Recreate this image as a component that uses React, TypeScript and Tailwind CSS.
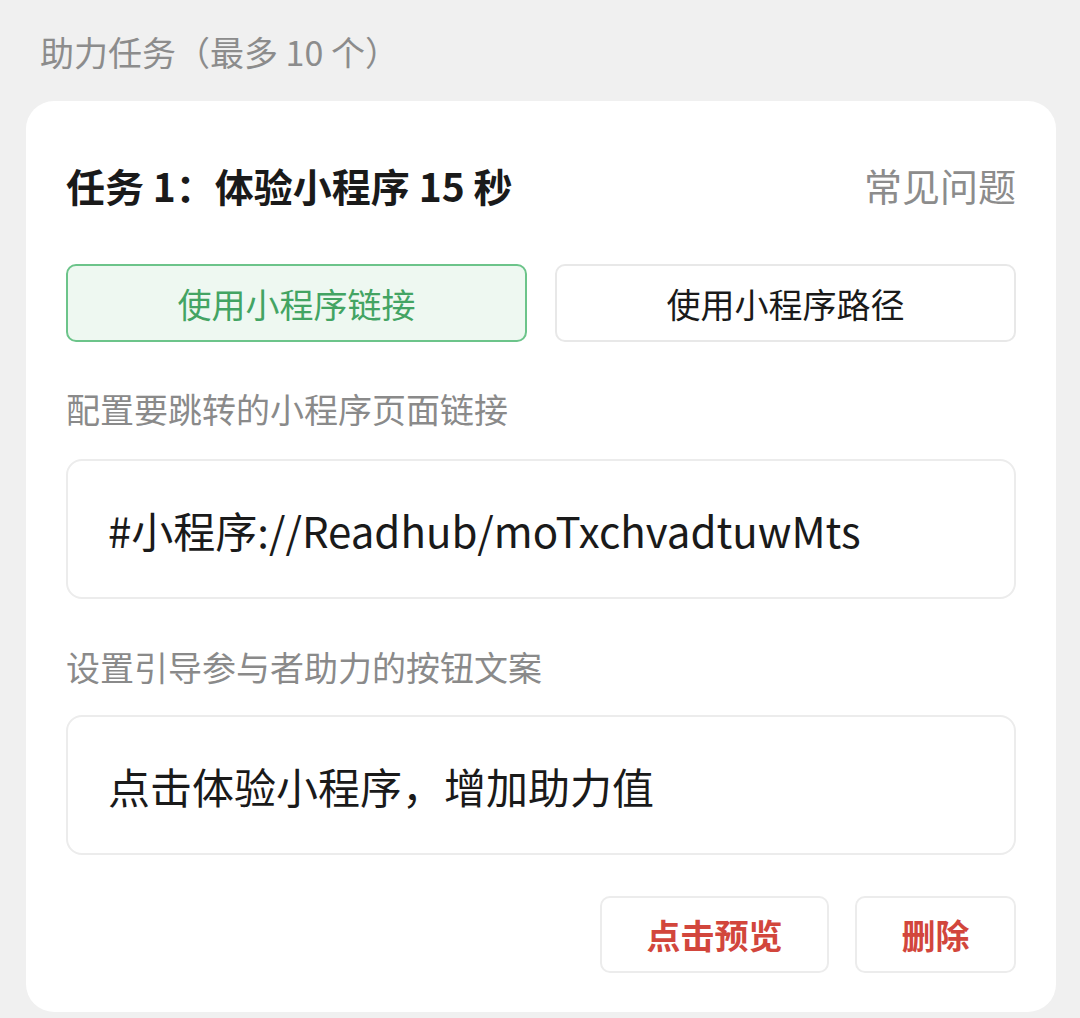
const font = "font-['Noto_Sans_CJK_SC','Noto_Sans',sans-serif]";

function Label({ children }: { children: React.ReactNode }) {
  return <p className="text-[34px] leading-[46px] text-[#8a8a8a]">{children}</p>;
}

function Field({ value }: { value: string }) {
  return (
    <div className="flex h-[140px] items-center rounded-[16px] border-2 border-[#ececec] px-[40px] text-[42px] text-[#1a1a1a]">
      {value}
    </div>
  );
}

export default function App() {
  return (
    <div className={`${font} min-h-[1018px] w-[1080px] bg-[#f0f0f0] pt-[28px]`}>
      <h2 className="pl-[40px] text-[34px] leading-[48px] text-[#8c8c8c]">助力任务（最多 10 个）</h2>
      <div className="ml-[26px] mr-[24px] mt-[25px] rounded-[28px] bg-white px-[40px] pt-[58px] pb-[39px]">
        <div className="flex items-center justify-between">
          <h3 className="text-[39px] leading-[52px] font-bold text-[#1a1a1a]">任务 1：体验小程序 15 秒</h3>
          <span className="text-[38px] leading-[52px] text-[#8c8c8c]">常见问题</span>
        </div>

        <div className="mt-[53px] grid grid-cols-2 gap-[28px]">
          <button className="h-[78px] rounded-[10px] border-2 border-[#6cc48a] bg-[#eef8f1] text-[34px] text-[#43a463]">
            使用小程序链接
          </button>
          <button className="h-[78px] rounded-[10px] border-2 border-[#e8e8e8] bg-white text-[34px] text-[#1a1a1a]">
            使用小程序路径
          </button>
        </div>

        <div className="mt-[44px]">
          <Label>配置要跳转的小程序页面链接</Label>
        </div>
        <div className="mt-[27px]">
          <Field value="#小程序://Readhub/moTxchvadtuwMts" />
        </div>

        <div className="mt-[45px]">
          <Label>设置引导参与者助力的按钮文案</Label>
        </div>
        <div className="mt-[25px]">
          <Field value="点击体验小程序，增加助力值" />
        </div>

        <div className="mt-[41px] flex justify-end gap-[26px]">
          <button className="h-[77px] w-[229px] rounded-[10px] border-2 border-[#ececec] text-[34px] font-bold text-[#d2463c]">
            点击预览
          </button>
          <button className="h-[77px] w-[161px] rounded-[10px] border-2 border-[#ececec] text-[34px] font-bold text-[#d2463c]">
            删除
          </button>
        </div>
      </div>
    </div>
  );
}
